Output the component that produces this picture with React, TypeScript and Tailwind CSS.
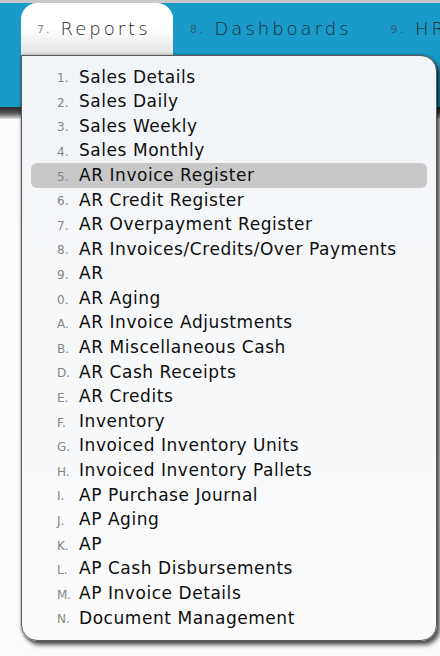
// ─── Reports menu ────────────────────────────────────────────────────────────
// Top nav with the "Reports" tab open and its dropdown list of reports.

const REPORTS: [string, string][] = [
  ["1.", "Sales Details"],
  ["2.", "Sales Daily"],
  ["3.", "Sales Weekly"],
  ["4.", "Sales Monthly"],
  ["5.", "AR Invoice Register"],
  ["6.", "AR Credit Register"],
  ["7.", "AR Overpayment Register"],
  ["8.", "AR Invoices/Credits/Over Payments"],
  ["9.", "AR"],
  ["0.", "AR Aging"],
  ["A.", "AR Invoice Adjustments"],
  ["B.", "AR Miscellaneous Cash"],
  ["D.", "AR Cash Receipts"],
  ["E.", "AR Credits"],
  ["F.", "Inventory"],
  ["G.", "Invoiced Inventory Units"],
  ["H.", "Invoiced Inventory Pallets"],
  ["I.", "AP Purchase Journal"],
  ["J.", "AP Aging"],
  ["K.", "AP"],
  ["L.", "AP Cash Disbursements"],
  ["M.", "AP Invoice Details"],
  ["N.", "Document Management"],
];

const ACTIVE = "AR Invoice Register";

export default function App() {
  return (
    <div className="relative w-[440px] h-[656px] overflow-hidden bg-[#fbfbfb] font-['DejaVu_Sans',Verdana,sans-serif]">
      {/* ── Header bar ─────────────────────────────────────────────────── */}
      <div className="h-[3px] bg-[#c8c8c8]" />
      <div className="h-[104px] bg-[#1a9ac8] flex items-start overflow-hidden">
        {/* open tab */}
        <div className="shrink-0 ml-[21px] w-[152px] h-[52px] rounded-t-[16px] bg-gradient-to-b from-white via-white to-[#e2e2e2] flex items-center pl-[16px] pb-[1px]">
          <span className="text-[11px] text-[#8a8a8a] tracking-[2px] mr-[9px] mt-[3px]">7.</span>
          <span className="text-[18px] text-[#222] tracking-[3px] font-light">Reports</span>
        </div>
        <div className="shrink-0 h-[52px] flex items-center ml-[17px] pb-[1px]">
          <span className="text-[11px] text-[#2d5f76] tracking-[2px] mr-[10px] mt-[3px]">8.</span>
          <span className="text-[18px] text-[#1c2a33] tracking-[3px] font-light">Dashboards</span>
        </div>
        <div className="shrink-0 h-[52px] flex items-center ml-[39px] pb-[1px]">
          <span className="text-[11px] text-[#2d5f76] tracking-[2px] mr-[10px] mt-[3px]">9.</span>
          <span className="text-[18px] text-[#1c2a33] tracking-[3px] font-light">HR</span>
        </div>
      </div>
      <div className="h-[12px] bg-gradient-to-b from-[#2b2b2b] via-[#555] to-[#e4e4e4]" />

      {/* ── Dropdown panel ─────────────────────────────────────────────── */}
      <div className="absolute left-[21px] top-[55px] w-[416px] rounded-tr-[16px] rounded-b-[16px] bg-gradient-to-b from-[#f1f4f7] to-[#fbfbfb] border border-[#5a5a5a] shadow-[0_0_3px_rgba(0,0,0,0.45),3px_4px_4px_rgba(0,0,0,0.65)] py-[9px]">
        {REPORTS.map(([key, label]) => (
          <div
            key={key + label}
            className={`mx-[9px] h-[24.6px] rounded-[6px] flex items-center pl-[26px] ${
              label === ACTIVE ? "bg-[#c8c8c8]" : ""
            }`}
          >
            <span className="text-[12px] text-[#858585] w-[22px] shrink-0 mt-[2px]">{key}</span>
            <span className="text-[17px] tracking-[0.55px] text-[#0e0e0e] whitespace-nowrap">{label}</span>
          </div>
        ))}
      </div>
    </div>
  );
}
